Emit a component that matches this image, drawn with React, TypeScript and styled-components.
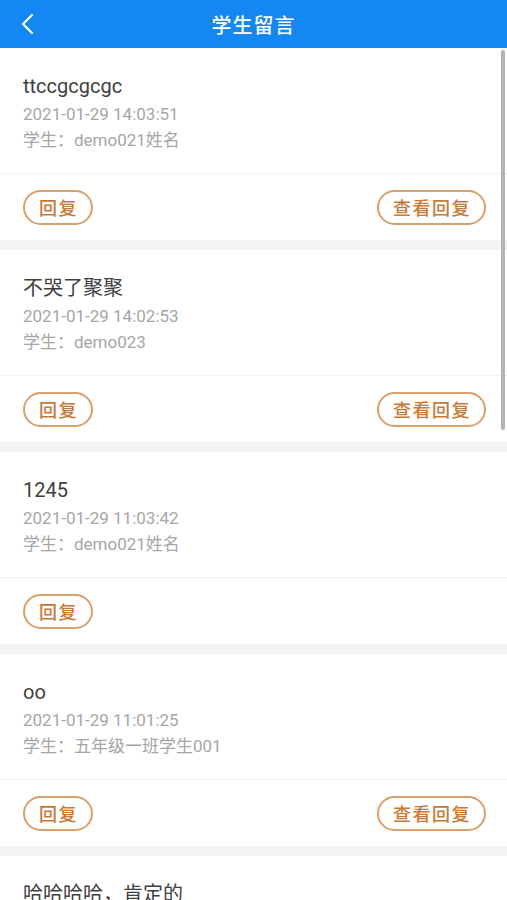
import React from "react";
import styled, { createGlobalStyle } from "styled-components";

type Message = {
  content: string;
  time: string;
  student: string;
  hasReply: boolean;
};

const messages: Message[] = [
  { content: "ttccgcgcgc", time: "2021-01-29 14:03:51", student: "demo021姓名", hasReply: true },
  { content: "不哭了聚聚", time: "2021-01-29 14:02:53", student: "demo023", hasReply: true },
  { content: "1245", time: "2021-01-29 11:03:42", student: "demo021姓名", hasReply: false },
  { content: "oo", time: "2021-01-29 11:01:25", student: "五年级一班学生001", hasReply: true },
  { content: "哈哈哈哈，肯定的", time: "2021-01-29 10:58:12", student: "demo021姓名", hasReply: true },
];

export default function App() {
  return (
    <Page>
      <GlobalStyle />
      <Header>
        <BackButton aria-label="back">
          <svg width="14" height="22" viewBox="0 0 14 22" fill="none">
            <path d="M12 2L3 11l9 9" stroke="#fff" strokeWidth="2.2" strokeLinecap="round" strokeLinejoin="round" />
          </svg>
        </BackButton>
        <Title>学生留言</Title>
      </Header>
      <List>
        {messages.map((m, idx) => (
          <Card key={idx}>
            <Body>
              <Content>{m.content}</Content>
              <Meta>{m.time}</Meta>
              <Meta>学生：{m.student}</Meta>
            </Body>
            <Actions>
              <Pill>回复</Pill>
              {m.hasReply && <Pill>查看回复</Pill>}
            </Actions>
          </Card>
        ))}
      </List>
      <ScrollThumb />
    </Page>
  );
}

const GlobalStyle = createGlobalStyle`
  html, body {
    margin: 0;
    padding: 0;
    background: #f3f3f3;
    font-family: Roboto, "Noto Sans CJK SC", sans-serif;
  }
  body {
    overflow: hidden;
  }
`;

const Page = styled.div`
  position: relative;
  width: 507px;
  height: 900px;
  overflow: hidden;
  background: #f3f3f3;
`;

const Header = styled.div`
  height: 48px;
  background: #1388f2;
  display: flex;
  align-items: center;
  justify-content: center;
  position: relative;
`;

const BackButton = styled.div`
  position: absolute;
  left: 20px;
  top: 13px;
  display: flex;
`;

const Title = styled.div`
  color: #fff;
  font-size: 20px;
  font-weight: 500;
  letter-spacing: 1px;
`;

const List = styled.div`
  display: flex;
  flex-direction: column;
  gap: 10px;
`;

const Card = styled.div`
  background: #fff;
`;

const Body = styled.div`
  padding: 23px 23px 20px;
  border-bottom: 1px solid #f0f0f0;
  display: flex;
  flex-direction: column;
`;

const Content = styled.div`
  font-size: 20px;
  color: #404040;
  line-height: 30px;
`;

const Meta = styled.div`
  font-size: 17px;
  color: #a6a6a6;
  line-height: 26px;
`;

const Actions = styled.div`
  height: 66px;
  padding: 0 21px 0 23px;
  display: flex;
  align-items: center;
  justify-content: space-between;
`;

const Pill = styled.div`
  height: 31px;
  padding: 0 13px 0 14px;
  border: 2px solid #d9a06c;
  border-radius: 18px;
  color: #c67a38;
  font-size: 18px;
  font-weight: 500;
  letter-spacing: 1.5px;
  display: flex;
  align-items: center;
`;

const ScrollThumb = styled.div`
  position: absolute;
  right: 2px;
  top: 50px;
  width: 4px;
  height: 380px;
  background: #b5b5b5;
  border-radius: 2px;
`;
